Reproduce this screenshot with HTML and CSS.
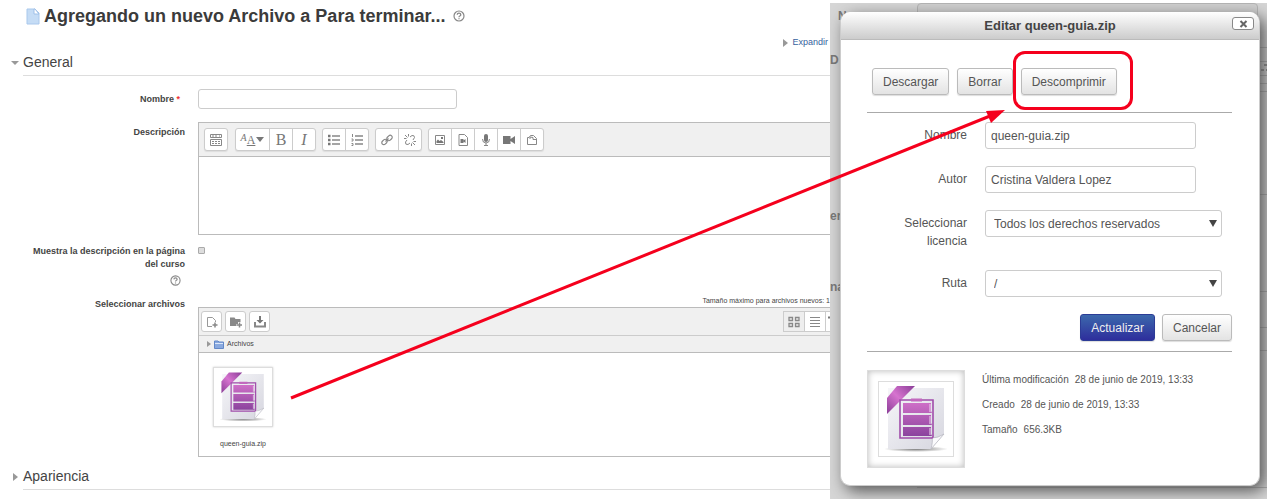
FILE: index.html
```html
<!DOCTYPE html>
<html lang="es">
<head>
<meta charset="utf-8">
<title>Agregando un nuevo Archivo</title>
<link rel="stylesheet" href="styles.css">
</head>
<body>
<svg class="defs" aria-hidden="true">
  <defs>
    <linearGradient id="paper" x1="0" y1="0" x2="1" y2="1"><stop offset="0" stop-color="#f6f6f9"/><stop offset="1" stop-color="#d6d6df"/></linearGradient>
    <linearGradient id="ribbon" x1="0" y1="1" x2="1" y2="0"><stop offset="0" stop-color="#8a3d97"/><stop offset=".5" stop-color="#d673cf"/><stop offset="1" stop-color="#8a3d97"/></linearGradient>
    <linearGradient id="books" gradientUnits="userSpaceOnUse" x1="0" y1="18" x2="0" y2="54"><stop offset="0" stop-color="#d070c8"/><stop offset="1" stop-color="#87419b"/></linearGradient>
    <radialGradient id="ground"><stop offset="0" stop-color="#777"/><stop offset="1" stop-color="#777" stop-opacity="0"/></radialGradient>
    <symbol id="zip" viewBox="0 0 70 70">
      <ellipse cx="35" cy="65" rx="32" ry="3" fill="url(#ground)"/>
      <path d="M7 4H63V50L50 65H7Z" fill="url(#paper)"/>
      <path d="M50 65Q52 57 51 54Q57 54 63 50Z" fill="#fafafc" stroke="#b9b9c2" stroke-width=".8"/>
      <path d="M16 2H34L6 30V14Z" fill="url(#ribbon)"/>
      <path d="M19 16H52V53L51 54H19Z" fill="none" stroke="#a04caa" stroke-width="1.6"/>
      <rect x="30" y="14.500" width="11" height="3" fill="#c268be"/>
      <path d="M22 19H50V27L51 29H22ZM22 31H50V39L51 41H22ZM22 43H50V50L51 52H22Z" fill="url(#books)"/>
      <path d="M49 20V28M49 32V40M49 44V51" stroke="#edd5ef"/>
    </symbol>
    <symbol id="help" viewBox="0 0 12 12">
      <circle cx="6" cy="6" r="5" fill="none" stroke="#888" stroke-width="1.200"/>
      <path d="M4.200 4.800Q4.300 3.200 6 3.200T7.800 4.700Q7.800 5.600 6.700 6Q6 6.300 6 7.200M6 8.200V9.300" fill="none" stroke="#888" stroke-width="1.300"/>
    </symbol>
  </defs>
</svg>
<div class="page">
  <main class="main">
    <header class="title">
      <svg width="14" height="17" viewBox="0 0 14 17"><path d="M1 1H9L13 5V16H1Z" fill="#c5dcf5" stroke="#a9c8ec"/><path d="M8 1V6H13L9 1Z" fill="#fff" stroke="#9fc0e8"/></svg>
      <h1>Agregando un nuevo Archivo a Para terminar...</h1>
      <svg class="title-help" width="12" height="12"><use href="#help"/></svg>
    </header>
    <a class="expand" href="#"><span class="tri"></span>Expandir</a>

    <h2 class="section"><span class="tri tri-down"></span><span>General</span></h2>
    <form class="fields">
      <label class="label" for="name">Nombre <span class="req">*</span></label>
      <input class="text-input" id="name" type="text">

      <label class="label label-desc" for="desc">Descripción</label>
      <div class="editor">
        <div class="editor-bar">
          <div class="group"><button type="button" aria-label="Mostrar más botones"><svg width="12" height="12" viewBox="0 0 12 12"><path d="M.5.5H11.500V3.500H.5ZM.5 5.500H11.500V11.500H.5Z" fill="none" stroke="#888"/><path d="M2 2H7M9 2H10M2 7.500H10M2 9.500H10" stroke="#888" stroke-dasharray="2 1"/></svg></button></div>
          <div class="group"><button type="button" class="wide serif"><i>A</i><u>A</u><span class="caret"></span></button><button type="button" class="serif">B</button><button type="button" class="serif"><em>I</em></button></div>
          <div class="group"><button type="button" aria-label="Lista"><svg width="12" height="12" viewBox="0 0 12 12"><path d="M0 2H2.500M0 6H2.500M0 10H2.500" stroke="#777" stroke-width="2.400"/><path d="M4 2H12M4 6H12M4 10H12" stroke="#888" stroke-width="1.600"/></svg></button><button type="button" aria-label="Lista numerada"><svg width="12" height="12" viewBox="0 0 12 12"><path d="M1.500 0V3M.5 5H2V7H.5M.5 9.500H2V11.500H.5" fill="none" stroke="#888"/><path d="M4 2H12M4 6H12M4 10H12" stroke="#888" stroke-width="1.600"/></svg></button></div>
          <div class="group"><button type="button" aria-label="Enlace"><svg width="12" height="12" viewBox="0 0 12 12"><g fill="none" stroke="#888" stroke-width="1.200"><rect x="5.500" y="2" width="6" height="4" rx="2" transform="rotate(-45 8.500 4)"/><rect x=".5" y="6" width="6" height="4" rx="2" transform="rotate(-45 3.500 8)"/><path d="M4.500 7.500L7.500 4.500"/></g></svg></button><button type="button" aria-label="Quitar enlace"><svg width="12" height="12" viewBox="0 0 12 12"><path d="M6 3L8 1.500Q10.500 1 10.500 3.500L9 6M3 6L1.500 8Q1 11 4 10.500L6 9M1 1L3.500 3.500M4.500 0V2.500M0 4.500H2.500M11 11L8.500 8.500M7.500 12V9.500M12 7.500H9.500" fill="none" stroke="#888"/></svg></button></div>
          <div class="group"><button type="button" aria-label="Imagen"><svg width="12" height="12" viewBox="0 0 12 12"><path d="M1.500 1.500H10.500V10.500H1.500Z" fill="none" stroke="#888"/><path d="M2.500 9V7L4 5.500L5.500 7L7 6L9.500 8V9ZM7 3H9V5H7Z" fill="#777"/></svg></button><button type="button" aria-label="Multimedia"><svg width="12" height="12" viewBox="0 0 12 12"><path d="M2 .5H7.500L10.500 3.500V11.500H2Z" fill="none" stroke="#888"/><path d="M3.500 5H6.500V6.500L8.500 5V9L6.500 7.500V9H3.500Z" fill="#777"/></svg></button><button type="button" aria-label="Grabar audio"><svg width="12" height="12" viewBox="0 0 12 12"><rect x="4" y="0" width="4" height="8" rx="2" fill="#777"/><path d="M2.500 5Q2.500 9 6 9T9.500 5M6 9V11.500M4 11.500H8" fill="none" stroke="#888"/></svg></button><button type="button" aria-label="Grabar vídeo"><svg width="12" height="12" viewBox="0 0 12 12"><path d="M0 2H7.500V5L12 2V10L7.500 7V10H0Z" fill="#777"/></svg></button><button type="button" aria-label="Archivos"><svg width="12" height="12" viewBox="0 0 12 12"><path d="M1.500 10.500V3.500H3L4.500 1.500H7.500L10.500 4.500V10.500ZM4 5V3L7 3.500V5.500H10" fill="none" stroke="#888"/></svg></button></div>
        </div>
        <textarea id="desc"></textarea>
      </div>

      <label class="label label-show" for="show">Muestra la descripción en la página del curso <svg width="11" height="11"><use href="#help"/></svg></label>
      <input class="check" id="show" type="checkbox">

      <div class="label label-files">Seleccionar archivos</div>
      <div class="files">
        <div class="limit">Tamaño máximo para archivos nuevos: 1</div>
        <div class="manager">
          <div class="manager-bar">
            <button type="button" aria-label="Agregar"><svg width="12" height="12" viewBox="0 0 12 12"><path d="M6 10.500H1.500V1.500H6.500L9.500 4.500V6" fill="none" stroke="#999"/><path d="M9 6.500V11.500M6.500 9H11.500" stroke="#888" stroke-width="1.500"/></svg></button>
            <button type="button" aria-label="Crear carpeta"><svg width="12" height="12" viewBox="0 0 12 12"><path d="M0 1.500H4.500L5.500 3H10.500V6H8V8H6.500V10H0Z" fill="#888"/><path d="M9.500 6.500V11.500M7 9H12" stroke="#888" stroke-width="1.500"/></svg></button>
            <button type="button" aria-label="Descargar todo"><svg width="12" height="12" viewBox="0 0 12 12"><path d="M5 0H7V4H9.500L6 7.500L2.500 4H5Z" fill="#777"/><path d="M1 6V10.500H11V6" fill="none" stroke="#888" stroke-width="2"/></svg></button>
            <div class="views">
              <button type="button" class="on" aria-label="Iconos"><svg width="12" height="12" viewBox="0 0 12 12"><path d="M1 1.500H4.500V4.500H1ZM7.500 1.500H11V4.500H7.500ZM1 7.500H4.500V10.500H1ZM7.500 7.500H11V10.500H7.500Z" fill="none" stroke="#888" stroke-width="1.300"/></svg></button><button type="button" aria-label="Lista"><svg width="12" height="12" viewBox="0 0 12 12"><path d="M1 1.500H11M1 4.500H11M1 7.500H11M1 10.500H11" stroke="#888"/></svg></button><button type="button" class="cut" aria-label="Árbol"><svg width="2" height="12"><path d="M0 1.500H2" stroke="#777" stroke-width="2"/></svg></button>
            </div>
          </div>
          <nav class="path"><span class="tri"></span><svg width="10" height="9" viewBox="0 0 10 9"><path d="M.5 1H4L5 2H9.500V8.500H.5Z" fill="#89a9df" stroke="#6388c8"/><path d="M1 3.500H9" stroke="#dbe7fa"/></svg><a href="#">Archivos</a></nav>
          <a class="file" href="#"><span class="file-thumb"><svg width="52" height="52"><use href="#zip"/></svg></span><span>queen-guia.zip</span></a>
        </div>
      </div>
    </form>
    <h2 class="section section-last"><span class="tri"></span><span>Apariencia</span></h2>
  </main>

  <aside class="side">
    <svg class="behind" width="437" height="495" viewBox="0 0 437 495" aria-hidden="true">
      <path d="M87.500 20V4Q87.500.5 91 .5H424Q427.500.5 427.500 4V20" fill="#d0d0d0" stroke="#b5b5b5"/>
      <path d="M87 484.500H437M429 44.500H437M429 58.500H437M429 72.500H437M429 80.500H437M429 88.500H437M429 191.500H437M429 288.500H437M429 324.500H437M429 347.500H437" stroke="#aaa"/>
      <path d="M431 67H434M436 67H437M434 62H437" stroke="#888" stroke-width="2"/>
    </svg>
    <span class="ghost ghost-n">N</span><span class="ghost ghost-d">D</span><span class="ghost ghost-er">er</span><span class="ghost ghost-na">na</span>
    <section class="modal" role="dialog" aria-labelledby="dlg">
      <header class="modal-head">
        <h3 id="dlg">Editar queen-guia.zip</h3>
        <button class="close" type="button" aria-label="Cerrar"><svg width="9" height="8" viewBox="0 0 9 8"><path d="M1.500 1L7.500 7M7.500 1L1.500 7" stroke="#666" stroke-width="2"/></svg></button>
      </header>
      <form class="modal-body">
        <div class="actions"><button class="btn" type="button">Descargar</button><button class="btn" type="button">Borrar</button><span class="marked"><button class="btn" type="button">Descomprimir</button></span></div>
        <div class="edit">
          <label for="f1">Nombre</label><input id="f1" type="text" value="queen-guia.zip">
          <label for="f2">Autor</label><input id="f2" type="text" value="Cristina Valdera Lopez">
          <label for="f3">Seleccionar licencia</label><div class="select"><select id="f3"><option>Todos los derechos reservados</option></select></div>
          <label for="f4">Ruta</label><div class="select"><select id="f4"><option>/</option></select></div>
        </div>
        <div class="submit"><button class="btn primary" type="button">Actualizar</button><button class="btn" type="button">Cancelar</button></div>
        <div class="info">
          <div class="preview"><span><svg width="70" height="70"><use href="#zip"/></svg></span></div>
          <dl>
            <div><dt>Última modificación</dt><dd>28 de junio de 2019, 13:33</dd></div>
            <div><dt>Creado</dt><dd>28 de junio de 2019, 13:33</dd></div>
            <div><dt>Tamaño</dt><dd>656.3KB</dd></div>
          </dl>
        </div>
      </form>
    </section>
  </aside>
  <svg class="arrow" width="1270" height="501" viewBox="0 0 1270 501" aria-hidden="true"><path d="M291 398L990 116" stroke="#f5001d" stroke-width="3"/><path d="M1005 110L986 111L991 123Z" fill="#f5001d"/></svg>
</div>
</body>
</html>
```
FILE: styles.css
```css
* { box-sizing: border-box; }
body { margin: 0; background: #fff; color: #444; font: 9px/13px "Liberation Sans", Arial, sans-serif; }
button, input, select, textarea { font: inherit; color: inherit; margin: 0; }
button { padding: 0; }
a { color: inherit; text-decoration: none; }
h1, h2, h3, dl, dd { margin: 0; }
svg { display: block; flex: none; }
.defs { position: absolute; width: 0; height: 0; }
.page { position: relative; display: grid; grid-template-columns: minmax(0, 1fr) 437px; padding-right: 3px; overflow: hidden; }
.main { overflow: hidden; padding-top: 6px; }
.title { display: flex; align-items: center; gap: 4px; padding-left: 26px; height: 20px; }
.title h1 { font-size: 18px; line-height: 20px; color: #3b3b3b; white-space: nowrap; }
.title-help { margin-left: 4px; }
.tri { flex: none; border: 4px solid transparent; border-left: 5px solid #999; border-right: 0; }
.tri-down { border: 4px solid transparent; border-top: 4px solid #999; border-bottom: 0; }
.expand { display: flex; align-items: center; justify-content: flex-end; gap: 4px; margin-top: 10px; padding-right: 2px; color: #36629e; }
.section { display: flex; align-items: center; margin-top: 4px; padding-left: 11px; font-size: 14px; line-height: 18px; font-weight: 400; color: #444; }
.section .tri { width: 8px; margin-right: 4px; margin-bottom: 4px; }
.section .tri:not(.tri-down) { width: 5px; margin-left: 2px; margin-right: 5px; }
.section > :last-child { flex: 1; padding-bottom: 4px; border-bottom: 1px solid #ddd; }
.fields { display: grid; grid-template-columns: 185px minmax(0, 1fr); column-gap: 13px; margin-top: 13px; align-items: start; }
.label { font-weight: 700; text-align: right; padding-left: 24px; }
.fields > label:first-child { padding: 4px 5px 0 0; }
.req { color: #e33; }
.text-input { width: 259px; height: 20px; border: 1px solid #ccc; border-radius: 3px; background: #fff; }
.label-desc { margin-top: 17px; }
.editor { margin-top: 13px; border: 1px solid #bbb; border-right: 0; }
.editor-bar { display: flex; gap: 7px; height: 34px; padding: 5px; background: #f0f0f0; border-bottom: 1px solid #bbb; }
.group { display: flex; height: 23px; border: 1px solid #ccc; border-radius: 3px; background: #fff; box-shadow: 0 1px 1px #ddd; }
.group button { display: flex; align-items: center; justify-content: center; width: 22px; background: none; border: 0; border-left: 1px solid #ccc; }
.group button:first-child { border-left: 0; }
.group button.wide { width: 33px; }
.group + .group button + button { width: 23px; }
.group + .group ~ .group { margin-left: -1px; }
.serif { font: 16px/18px "Liberation Serif", serif; color: #777; }
.wide i { font-size: 10px; padding-bottom: 4px; }
.wide u { font-size: 12px; }
.caret { border: 4px solid transparent; border-top: 5px solid #777; border-bottom: 0; margin-left: 1px; }
.editor textarea { display: block; width: 100%; height: 77px; border: 0; resize: none; }
.label-show { margin-top: 10px; }
.label-show svg { margin: 4px 4px 0 auto; }
.check { appearance: none; width: 7px; height: 7px; margin-top: 12px; border: 1px solid #aaa; border-radius: 1px; background: #ddd; }
.label-files { margin-top: 12px; }
.files { margin-top: 9px; }
.limit { font-size: 7px; line-height: 12px; text-align: right; white-space: nowrap; }
.manager { border: 1px solid #bbb; border-right: 0; height: 150px; }
.manager-bar { display: flex; gap: 3px; height: 28px; padding: 3px 0 0 2px; background: #f0f0f0; border-bottom: 1px solid #ccc; }
.manager-bar button { display: flex; align-items: center; justify-content: center; width: 21px; height: 21px; background: #fff; border: 1px solid #ccc; border-radius: 3px; }
.views { display: flex; margin-left: auto; }
.views button { border-radius: 0; border-right: 0; }
.views .on { background: #eee; }
.views .cut { width: 5px; justify-content: flex-end; }
.path { display: flex; align-items: center; gap: 3px; height: 17px; padding-left: 8px; background: #f0f0f0; border-bottom: 1px solid #bbb; font-size: 7px; line-height: 10px; }
.path .tri { border-width: 3px 0 3px 4px; }
.file { display: flex; flex-direction: column; align-items: center; gap: 11px; width: 60px; margin: 14px 0 0 14px; font-size: 7px; line-height: 12px; white-space: nowrap; }
.file-thumb { padding: 3px; border: 1px solid #ddd; box-shadow: 0 0 2px #ccc; }
.section-last { margin-top: 10px; }

.side { position: relative; margin: 3px 0; padding: 9px 7px 13px 10px; background: #d6d6d6; overflow: hidden; }
.behind { position: absolute; left: 0; top: 0; }
.ghost { position: absolute; left: 0; font-size: 12px; font-weight: 700; color: #777; }
.ghost-n { left: 8px; top: 7px; }
.ghost-d { top: 51px; }
.ghost-er { top: 207px; }
.ghost-na { top: 278px; }
.modal { position: relative; border-radius: 10px; background: #fff; border: 1px solid #ccc; border-top: 0; box-shadow: 5px 5px 16px #555; font-size: 12px; line-height: 18px; color: #555; }
.modal-head { display: flex; align-items: center; justify-content: center; height: 28px; border-radius: 10px 10px 0 0; border-bottom: 1px solid #bbb; background: linear-gradient(#fff, #ccc); }
.modal-head h3 { font-size: 13px; color: #444; }
.close { position: absolute; right: 5px; top: 5px; display: flex; align-items: center; justify-content: center; width: 22px; height: 13px; border: 1px solid #888; border-radius: 3px; background: #fff; }
.modal-body { padding: 28px 27px 17px 26px; }
.actions { display: flex; gap: 8px; padding: 0 0 17px 5px; border-bottom: 1px solid #aaa; }
.btn { height: 27px; padding: 0 10px; border: 1px solid #bbb; border-radius: 3px; background: linear-gradient(#fff, #e3e3e3); box-shadow: 0 1px 1px #ddd; }
.marked { position: relative; }
.marked::after { content: ""; position: absolute; inset: -17px -16px -15px -8px; border: 3px solid #f5001d; border-radius: 12px; }
.edit { display: grid; grid-template-columns: 100px 1fr; column-gap: 18px; row-gap: 17px; margin-top: 9px; align-items: start; }
.edit label { text-align: right; padding: 4px 0 0 30px; }
.edit label[for="f3"] { padding-bottom: 3px; }
.edit input, .edit select { height: 27px; border: 1px solid #ccc; border-radius: 3px; background: #fff; }
.edit input { width: 211px; padding: 0 5px; }
.select { position: relative; width: 237px; }
.select select { appearance: none; display: block; width: 100%; padding: 0 8px; }
.select::after { content: ""; position: absolute; right: 5px; top: 10px; border: 4px solid transparent; border-top: 7px solid #444; border-bottom: 0; pointer-events: none; }
.submit { display: flex; justify-content: flex-end; gap: 7px; padding: 17px 0 10px; border-bottom: 1px solid #aaa; }
.primary { color: #eee; border-color: #2c3c96; background: linear-gradient(#3c68ac, #2e2e9c); }
.info { display: flex; gap: 17px; margin-top: 18px; font-size: 10px; line-height: 13px; }
.preview { padding: 10px; border: 1px solid #ddd; box-shadow: inset 0 0 6px #bbb; background: #fff; }
.preview span { display: block; padding: 2px; border: 1px solid #ddd; }
.info dl { display: grid; align-content: start; row-gap: 12px; padding-top: 3px; }
.info dl div { display: flex; gap: 6px; }
.arrow { position: absolute; left: 0; top: 0; pointer-events: none; }
```
